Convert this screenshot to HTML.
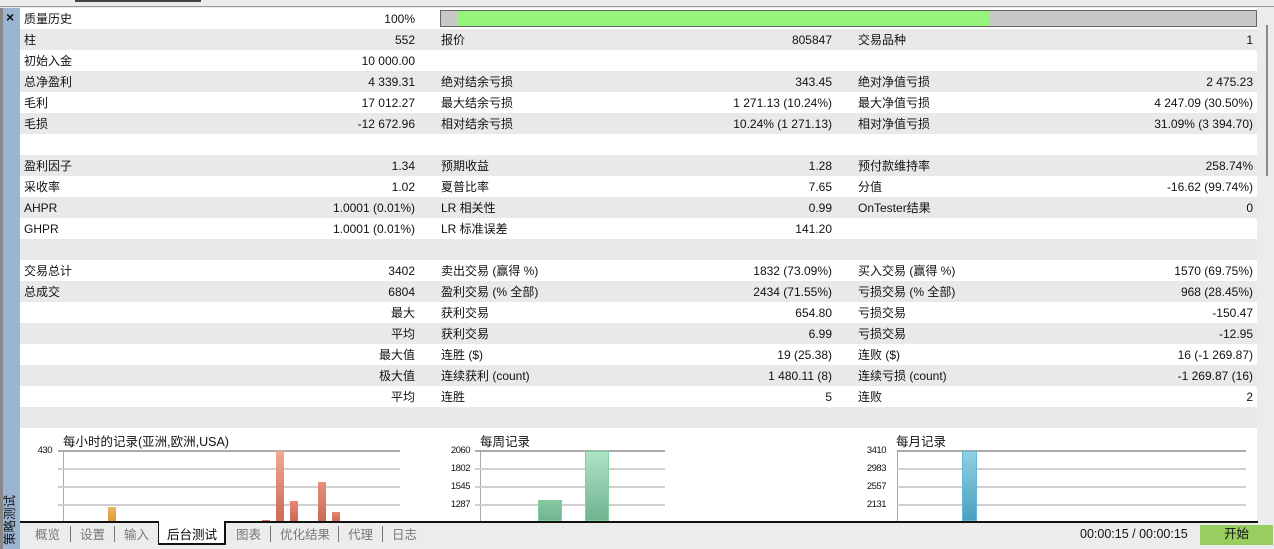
<!DOCTYPE html>
<html><head><meta charset="utf-8"><style>
*{margin:0;padding:0;box-sizing:border-box}
body{width:1274px;height:549px;overflow:hidden;background:#ececec;font-family:"Liberation Sans","Noto Sans CJK SC",sans-serif;font-size:12px;color:#111;position:relative}
.a{position:absolute;white-space:nowrap}
.row{position:absolute;left:20px;width:1237px;height:21px}
.g{background:#e9e9e9}.w{background:#fff}
.t{position:absolute;top:4px;line-height:15px}
.r{text-align:right}
.gl{position:absolute;height:2px;background:#d0d0d0}
.yl{position:absolute;font-size:9.5px;letter-spacing:-0.5px;text-align:right;width:30px}
.tab{position:absolute;top:524px;color:#777;font-size:12.5px}
.sep{position:absolute;top:526px;width:1px;height:16px;background:#777}
</style></head><body>
<div class="a" style="left:0;top:0;width:1274px;height:7px;background:#ececec;border-bottom:1px solid #999"></div>
<div class="a" style="left:75px;top:0;width:126px;height:2px;background:#444"></div>
<div class="a" style="left:0;top:8px;width:3px;height:541px;background:#888"></div>
<div class="a" style="left:3px;top:8px;width:17px;height:541px;background:#9bb4d2"></div>
<div class="a" style="left:6px;top:9px;font-size:14px;font-weight:bold;line-height:16px">×</div>
<div class="a" style="left:-19px;top:512px;width:58px;height:16px;line-height:16px;font-size:12.5px;text-align:center;transform:rotate(-90deg);color:#111">策略测试</div>
<div class="a" style="left:20px;top:8px;width:1237px;height:513px;background:#fff"></div>
<div class="a" style="left:1257px;top:8px;width:17px;height:513px;background:#ececec"></div>
<div class="a" style="left:1266px;top:25px;width:2px;height:151px;background:#888"></div>

<div class="row w" style="top:8px"><span class="t" style="left:4px">质量历史</span><span class="t r" style="right:842px">100%</span>
<div class="a" style="left:420px;top:2px;width:817px;height:17px;background:#c8c8c8;border:1px solid #666"><div class="a" style="left:16px;top:0;width:532px;height:15px;background:#96f47c"></div></div></div>
<div class="row g" style="top:29px"><span class="t" style="left:4px">柱</span><span class="t" style="right:842px">552</span><span class="t" style="left:421px">报价</span><span class="t" style="right:425px">805847</span><span class="t" style="left:838px">交易品种</span><span class="t" style="right:4px">1</span></div>
<div class="row w" style="top:50px"><span class="t" style="left:4px">初始入金</span><span class="t" style="right:842px">10 000.00</span></div>
<div class="row g" style="top:71px"><span class="t" style="left:4px">总净盈利</span><span class="t" style="right:842px">4 339.31</span><span class="t" style="left:421px">绝对结余亏损</span><span class="t" style="right:425px">343.45</span><span class="t" style="left:838px">绝对净值亏损</span><span class="t" style="right:4px">2 475.23</span></div>
<div class="row w" style="top:92px"><span class="t" style="left:4px">毛利</span><span class="t" style="right:842px">17 012.27</span><span class="t" style="left:421px">最大结余亏损</span><span class="t" style="right:425px">1 271.13 (10.24%)</span><span class="t" style="left:838px">最大净值亏损</span><span class="t" style="right:4px">4 247.09 (30.50%)</span></div>
<div class="row g" style="top:113px"><span class="t" style="left:4px">毛损</span><span class="t" style="right:842px">-12 672.96</span><span class="t" style="left:421px">相对结余亏损</span><span class="t" style="right:425px">10.24% (1 271.13)</span><span class="t" style="left:838px">相对净值亏损</span><span class="t" style="right:4px">31.09% (3 394.70)</span></div>
<div class="row w" style="top:134px"></div>
<div class="row g" style="top:155px"><span class="t" style="left:4px">盈利因子</span><span class="t" style="right:842px">1.34</span><span class="t" style="left:421px">预期收益</span><span class="t" style="right:425px">1.28</span><span class="t" style="left:838px">预付款维持率</span><span class="t" style="right:4px">258.74%</span></div>
<div class="row w" style="top:176px"><span class="t" style="left:4px">采收率</span><span class="t" style="right:842px">1.02</span><span class="t" style="left:421px">夏普比率</span><span class="t" style="right:425px">7.65</span><span class="t" style="left:838px">分值</span><span class="t" style="right:4px">-16.62 (99.74%)</span></div>
<div class="row g" style="top:197px"><span class="t" style="left:4px">AHPR</span><span class="t" style="right:842px">1.0001 (0.01%)</span><span class="t" style="left:421px">LR 相关性</span><span class="t" style="right:425px">0.99</span><span class="t" style="left:838px">OnTester结果</span><span class="t" style="right:4px">0</span></div>
<div class="row w" style="top:218px"><span class="t" style="left:4px">GHPR</span><span class="t" style="right:842px">1.0001 (0.01%)</span><span class="t" style="left:421px">LR 标准误差</span><span class="t" style="right:425px">141.20</span></div>
<div class="row g" style="top:239px"></div>
<div class="row w" style="top:260px"><span class="t" style="left:4px">交易总计</span><span class="t" style="right:842px">3402</span><span class="t" style="left:421px">卖出交易 (赢得 %)</span><span class="t" style="right:425px">1832 (73.09%)</span><span class="t" style="left:838px">买入交易 (赢得 %)</span><span class="t" style="right:4px">1570 (69.75%)</span></div>
<div class="row g" style="top:281px"><span class="t" style="left:4px">总成交</span><span class="t" style="right:842px">6804</span><span class="t" style="left:421px">盈利交易 (% 全部)</span><span class="t" style="right:425px">2434 (71.55%)</span><span class="t" style="left:838px">亏损交易 (% 全部)</span><span class="t" style="right:4px">968 (28.45%)</span></div>
<div class="row w" style="top:302px"><span class="t" style="right:842px">最大</span><span class="t" style="left:421px">获利交易</span><span class="t" style="right:425px">654.80</span><span class="t" style="left:838px">亏损交易</span><span class="t" style="right:4px">-150.47</span></div>
<div class="row g" style="top:323px"><span class="t" style="right:842px">平均</span><span class="t" style="left:421px">获利交易</span><span class="t" style="right:425px">6.99</span><span class="t" style="left:838px">亏损交易</span><span class="t" style="right:4px">-12.95</span></div>
<div class="row w" style="top:344px"><span class="t" style="right:842px">最大值</span><span class="t" style="left:421px">连胜 ($)</span><span class="t" style="right:425px">19 (25.38)</span><span class="t" style="left:838px">连败 ($)</span><span class="t" style="right:4px">16 (-1 269.87)</span></div>
<div class="row g" style="top:365px"><span class="t" style="right:842px">极大值</span><span class="t" style="left:421px">连续获利 (count)</span><span class="t" style="right:425px">1 480.11 (8)</span><span class="t" style="left:838px">连续亏损 (count)</span><span class="t" style="right:4px">-1 269.87 (16)</span></div>
<div class="row w" style="top:386px"><span class="t" style="right:842px">平均</span><span class="t" style="left:421px">连胜</span><span class="t" style="right:425px">5</span><span class="t" style="left:838px">连败</span><span class="t" style="right:4px">2</span></div>
<div class="row g" style="top:407px"></div>

<!-- hourly -->
<div class="a" style="left:63px;top:431px;font-size:12.5px">每小时的记录(亚洲,欧洲,USA)</div>
<div class="yl" style="left:22px;top:445px">430</div>
<div class="a" style="left:63px;top:450px;width:1px;height:71px;background:#aaa"></div>
<div class="gl" style="left:58px;top:450px;width:342px;background:#aaa"></div>
<div class="gl" style="left:58px;top:468px;width:342px"></div>
<div class="gl" style="left:58px;top:486px;width:342px"></div>
<div class="gl" style="left:58px;top:504px;width:342px"></div>
<div class="a" style="left:108px;top:507px;width:8px;height:14px;background:linear-gradient(#f0b860,#d89a3c)"></div>
<div class="a" style="left:262px;top:520px;width:8px;height:1px;background:#d07060"></div>
<div class="a" style="left:276px;top:451px;width:8px;height:70px;background:linear-gradient(#f0a890,#cc6a55)"></div>
<div class="a" style="left:290px;top:501px;width:8px;height:20px;background:linear-gradient(#e58a75,#cc6a55)"></div>
<div class="a" style="left:318px;top:482px;width:8px;height:39px;background:linear-gradient(#e8907a,#cc6a55)"></div>
<div class="a" style="left:332px;top:512px;width:8px;height:9px;background:linear-gradient(#e58a75,#cc6a55)"></div>

<!-- weekly -->
<div class="a" style="left:480px;top:431px;font-size:12.5px">每周记录</div>
<div class="yl" style="left:440px;top:445px">2060</div>
<div class="yl" style="left:440px;top:463px">1802</div>
<div class="yl" style="left:440px;top:481px">1545</div>
<div class="yl" style="left:440px;top:499px">1287</div>
<div class="a" style="left:480px;top:450px;width:1px;height:71px;background:#aaa"></div>
<div class="gl" style="left:475px;top:450px;width:190px;background:#aaa"></div>
<div class="gl" style="left:475px;top:468px;width:190px"></div>
<div class="gl" style="left:475px;top:486px;width:190px"></div>
<div class="gl" style="left:475px;top:504px;width:190px"></div>
<div class="a" style="left:538px;top:500px;width:24px;height:21px;background:linear-gradient(#88c8a0,#70b490);border:1px solid #7ed0a0"></div>
<div class="a" style="left:585px;top:451px;width:24px;height:70px;background:linear-gradient(#aee2c6,#70b490);border:1px solid #7ed0a0"></div>

<!-- monthly -->
<div class="a" style="left:896px;top:431px;font-size:12.5px">每月记录</div>
<div class="yl" style="left:856px;top:445px">3410</div>
<div class="yl" style="left:856px;top:463px">2983</div>
<div class="yl" style="left:856px;top:481px">2557</div>
<div class="yl" style="left:856px;top:499px">2131</div>
<div class="a" style="left:897px;top:450px;width:1px;height:71px;background:#aaa"></div>
<div class="gl" style="left:897px;top:450px;width:349px;background:#aaa"></div>
<div class="gl" style="left:897px;top:468px;width:349px"></div>
<div class="gl" style="left:897px;top:486px;width:349px"></div>
<div class="gl" style="left:897px;top:504px;width:349px"></div>
<div class="a" style="left:962px;top:451px;width:15px;height:70px;background:linear-gradient(#90d0e4,#4aa0c0);border:1px solid #60b8d8"></div>

<!-- bottom tabs -->
<div class="a" style="left:20px;top:521px;width:1238px;height:2px;background:#111"></div>
<div class="a" style="left:158px;top:521px;width:68px;height:24px;background:#fff;border:1px solid #111;border-top:none;border-width:0 2px 2px 1px"></div>
<div class="tab" style="left:35px">概览</div><div class="sep" style="left:70px"></div>
<div class="tab" style="left:80px">设置</div><div class="sep" style="left:114px"></div>
<div class="tab" style="left:124px">输入</div>
<div class="tab" style="left:167px;color:#000">后台测试</div>
<div class="tab" style="left:236px">图表</div><div class="sep" style="left:270px"></div>
<div class="tab" style="left:280px">优化结果</div><div class="sep" style="left:338px"></div>
<div class="tab" style="left:348px">代理</div><div class="sep" style="left:382px"></div>
<div class="tab" style="left:392px">日志</div>
<div class="a" style="left:1080px;top:527px;font-size:12.5px;color:#111">00:00:15 / 00:00:15</div>
<div class="a" style="left:1200px;top:525px;width:73px;height:20px;background:#9acd5f;text-align:center;line-height:19px;font-size:12.5px">开始</div>
</body></html>
